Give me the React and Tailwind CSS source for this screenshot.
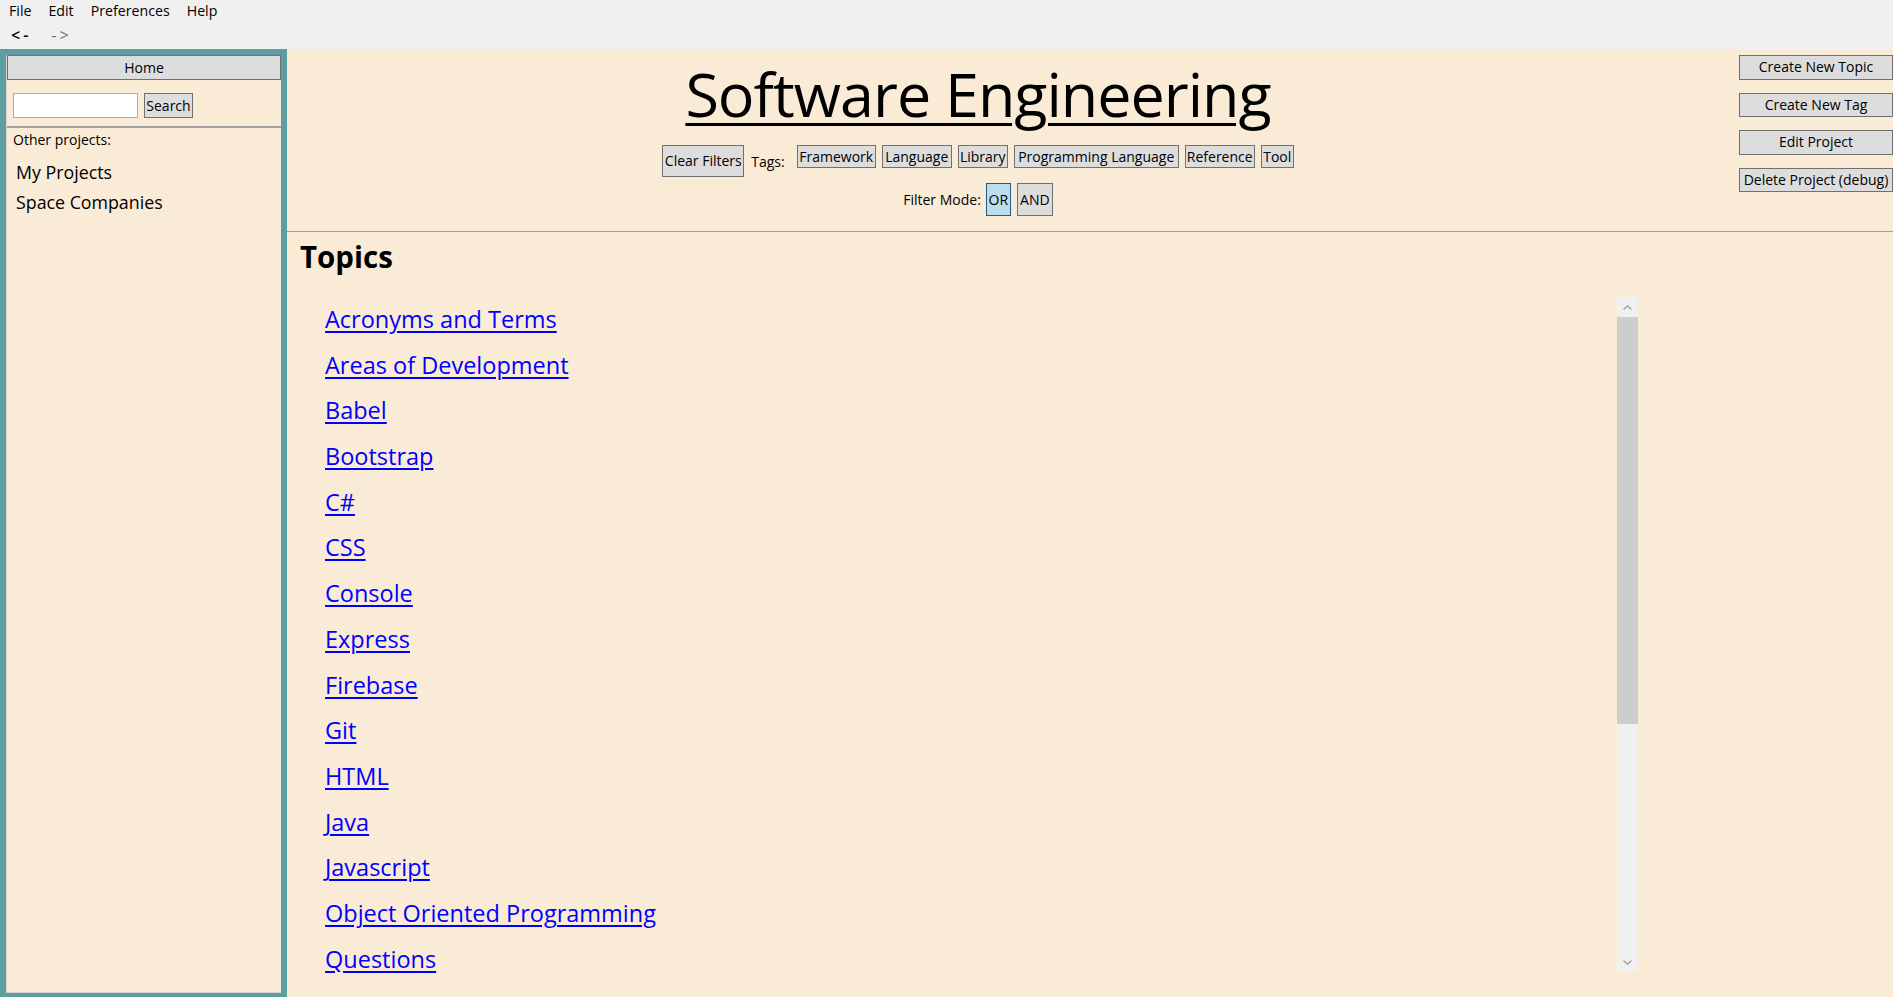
import React from "react";

const topics = [
  "Acronyms and Terms",
  "Areas of Development",
  "Babel",
  "Bootstrap",
  "C#",
  "CSS",
  "Console",
  "Express",
  "Firebase",
  "Git",
  "HTML",
  "Java",
  "Javascript",
  "Object Oriented Programming",
  "Questions",
];

const tags = [
  { name: "Framework", w: "w-[79px]" },
  { name: "Language", w: "w-[70px]" },
  { name: "Library", w: "w-[50px]" },
  { name: "Programming Language", w: "w-[165px]" },
  { name: "Reference", w: "w-[70px]" },
  { name: "Tool", w: "w-[33px]" },
];

const winBtn = "bg-[#dddddd] border border-[#707070] text-black text-[14px] leading-none flex items-center justify-center whitespace-nowrap";

const Chevron = ({ up }) => (
  <svg width="9" height="5" viewBox="0 0 9 5" className="block">
    <path d={up ? "M0.5 4.5 L4.5 0.8 L8.5 4.5" : "M0.5 0.5 L4.5 4.2 L8.5 0.5"} fill="none" stroke="#a3a3a3" strokeWidth="1.4" />
  </svg>
);

const App = () => {
  return (
    <div className="h-screen flex flex-col overflow-hidden bg-[#f0f0f0] text-black font-['Open_Sans',sans-serif]">
      {/* Menu bar */}
      <div className="h-[21px] flex items-center text-[14.2px] pl-[0.5px]">
        {["File", "Edit", "Preferences", "Help"].map((m) => (
          <span key={m} className="px-[8.5px]">{m}</span>
        ))}
      </div>
      {/* Back / forward */}
      <div className="h-[28px] flex items-center text-[16px] font-semibold pl-[11px] gap-[20px] tracking-[3px]">
        <span className="text-black">&lt;-</span>
        <span className="text-[#6d6d6d] font-normal">-&gt;</span>
      </div>

      <div className="flex-1 flex min-h-0">
        {/* Sidebar */}
        <aside className="w-[287px] bg-[#5f9ea0] pt-[6px] px-[6px] pb-[4px] flex">
          <div className="flex-1 bg-[#faebd7] border-l border-b border-[#d8d4cc] flex flex-col">
            <button className={`${winBtn} h-[25px] w-full`}>Home</button>
            <div className="flex items-center mt-[13px] pl-[6px] gap-[6px]">
              <input className="w-[125px] h-[25px] bg-white border border-[#abadb3] outline-none" />
              <button className={`${winBtn} w-[49px] h-[25px]`}>Search</button>
            </div>
            <div className="mt-[8px] h-[2px] bg-[#a0a0a0]" />
            <div className="mt-[2px] pl-[6px] text-[14px] leading-[20px]">Other projects:</div>
            <div className="mt-[7px] pl-[9px] text-[17.8px] leading-[30px]">
              <div>My Projects</div>
              <div>Space Companies</div>
            </div>
          </div>
        </aside>

        {/* Main */}
        <main className="flex-1 bg-[#faebd7] flex flex-col min-w-0">
          <header className="h-[183px] flex border-b border-[#a0a0a0]">
            <div className="flex-1 flex flex-col items-center">
              <h1 className="mt-[14px] text-[61px] leading-none tracking-[-1px] underline decoration-[3px] underline-offset-[6px]">
                Software Engineering
              </h1>
              <div className="mt-[21px] flex items-start">
                <button className={`${winBtn} w-[82px] h-[32px]`}>Clear Filters</button>
                <span className="ml-[7px] pt-[7px] text-[14px] leading-[20px]">Tags:</span>
                <div className="ml-[12px] flex gap-[6px]">
                  {tags.map((t) => (
                    <button key={t.name} className={`${winBtn} ${t.w} h-[23px]`}>{t.name}</button>
                  ))}
                </div>
              </div>
              <div className="mt-[6px] flex items-center">
                <span className="text-[14px]">Filter Mode:</span>
                <button className="ml-[5px] w-[25px] h-[33px] bg-[#bcddee] border border-[#245a83] text-[14px] flex items-center justify-center">OR</button>
                <button className={`${winBtn} ml-[6px] w-[36px] h-[33px]`}>AND</button>
              </div>
            </div>
            <div className="w-[224px] flex flex-col items-end pt-[6px] gap-[13px]">
              <button className={`${winBtn} w-[154px] h-[24.5px] text-[14.5px]`}>Create New Topic</button>
              <button className={`${winBtn} w-[154px] h-[24.5px] text-[14.5px]`}>Create New Tag</button>
              <button className={`${winBtn} w-[154px] h-[24.5px] text-[14.5px]`}>Edit Project</button>
              <button className={`${winBtn} w-[154px] h-[24.5px] text-[14.5px]`}>Delete Project (debug)</button>
            </div>
          </header>

          <section className="pl-[13px] flex flex-col">
            <h2 className="mt-[5px] text-[29.5px] font-bold leading-[40px]">Topics</h2>
            <div className="mt-[20px] h-[675px] mr-[255px] flex">
              <ul className="flex-1 pl-[25px]">
                {topics.map((t) => (
                  <li key={t} className="h-[45.7px] leading-[45.7px] text-[23.5px]">
                    <a href="#" className="text-[#0000ff] underline underline-offset-[3px] decoration-[1.5px]">{t}</a>
                  </li>
                ))}
              </ul>
              <div className="w-[21px] bg-[#f0f0f0] flex flex-col">
                <div className="h-[20px] flex items-center justify-center"><Chevron up /></div>
                <div className="h-[407px] bg-[#cdcdcd]" />
                <div className="flex-1" />
                <div className="h-[20px] flex items-center justify-center"><Chevron /></div>
              </div>
            </div>
          </section>
        </main>
      </div>
    </div>
  );
};

export default App;
